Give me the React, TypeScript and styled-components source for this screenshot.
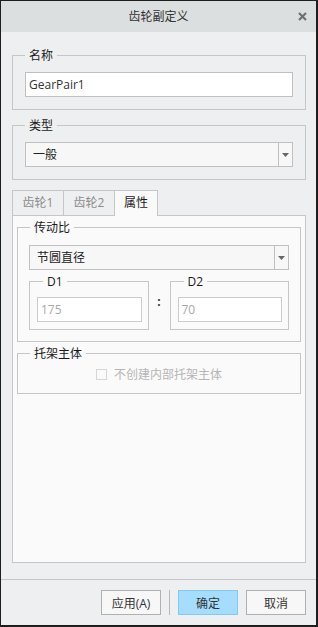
import React from "react";
import styled, { createGlobalStyle } from "styled-components";

const FONT = `"Open Sans", "Noto Sans CJK SC", sans-serif`;

const GlobalStyle = createGlobalStyle`
  html, body { margin: 0; padding: 0; background: #ffffff; }
  body { font-family: ${FONT}; font-size: 12px; }
  *, *::before, *::after { box-sizing: border-box; }
`;

const Window = styled.div`
  width: 318px;
  height: 627px;
  display: flex;
  flex-direction: column;
  border-style: solid;
  border-color: #1e1e1e;
  border-width: 1px 2px 2px 1px;
  background: #eeeff0;
  font-family: ${FONT};
  font-size: 12px;
  color: #222;
`;

const TitleBar = styled.div`
  flex: none;
  height: 31px;
  display: grid;
  grid-template-columns: 1fr auto 1fr;
  align-items: center;
  background: #dcdfe0;
`;

const Title = styled.div`
  grid-column: 2;
  color: #333;
  line-height: 17px;
`;

const CloseButton = styled.button`
  grid-column: 3;
  justify-self: end;
  margin-right: 9px;
  width: 9px;
  height: 9px;
  padding: 0;
  border: 0;
  background: none;
  display: flex;
  cursor: pointer;
`;

const Body = styled.div`
  flex: 1;
  min-height: 0;
  display: flex;
  flex-direction: column;
  padding: 15px 10px 16px 11px;
`;

const FieldBox = styled.fieldset<{ $mt?: number }>`
  margin: ${(p) => p.$mt ?? 0}px 0 0;
  padding: 0;
  min-width: 0;
  border: 1px solid #c6c6c6;
`;

const Legend = styled.legend<{ $ml?: number }>`
  margin-left: ${(p) => p.$ml ?? 12}px;
  padding: 0 4px;
  line-height: 17px;
  font-size: 12px;
  color: #1a1a1a;
`;

const FieldContent = styled.div<{ $pad: string }>`
  padding: ${(p) => p.$pad};
`;

const TextInput = styled.input`
  display: block;
  width: 100%;
  height: 25px;
  margin: 0;
  padding: 0 3px;
  border: 1px solid #c0c0c0;
  background: #ffffff;
  font: 12px ${FONT};
  color: #333;
  outline: none;

  &:disabled {
    color: #a9a9a9;
    border-color: #cccccc;
    background: #ffffff;
  }
`;

const Select = styled.div`
  display: flex;
  height: 25px;
  border: 1px solid #c0c0c0;
  background: #f7f7f7;
`;

const SelectValue = styled.div`
  flex: 1;
  padding-left: 7px;
  line-height: 23px;
  color: #222;
`;

const SelectArrow = styled.div`
  width: 14px;
  border-left: 1px solid #c0c0c0;
  display: flex;
  align-items: center;
  justify-content: center;
`;

const TabStrip = styled.div`
  display: flex;
  align-items: flex-start;
  margin-top: 10px;
`;

const Tab = styled.div<{ $active?: boolean }>`
  min-width: ${(p) => (p.$active ? 44 : 52)}px;
  height: ${(p) => (p.$active ? 26 : 25)}px;
  margin-right: -1px;
  margin-bottom: ${(p) => (p.$active ? -1 : 0)}px;
  padding: 0 9px;
  border: 1px solid #c6c6c6;
  border-bottom: none;
  line-height: 24px;
  text-align: center;
  background: ${(p) => (p.$active ? "#fafafa" : "#eeeff0")};
  color: ${(p) => (p.$active ? "#1a1a1a" : "#8c8c8c")};
  position: relative;
  z-index: ${(p) => (p.$active ? 1 : 0)};
`;

const Panel = styled.div`
  flex: 1;
  display: flex;
  flex-direction: column;
  padding: 3px 4px 0;
  border: 1px solid #c6c6c6;
  background: #fafafa;
`;

const RatioRow = styled.div`
  display: grid;
  grid-template-columns: 1fr 21px 1fr;
  margin-top: 3px;
`;

const Colon = styled.div`
  padding-top: 20px;
  line-height: 17px;
  text-align: center;
  font-weight: 700;
  color: #333;
`;

const CheckRow = styled.label`
  display: flex;
  justify-content: center;
  align-items: center;
  gap: 7px;
  line-height: 17px;
  color: #b5b5b5;
`;

const CheckBox = styled.span`
  width: 11px;
  height: 11px;
  border: 1px solid #d6d6d6;
  background: #fafafa;
`;

const Footer = styled.div`
  flex: none;
  display: flex;
  justify-content: flex-end;
  align-items: center;
  gap: 8px;
  padding: 10px 10px 10px 0;
  border-top: 1px solid #c6c6c6;
`;

const Button = styled.button<{ $primary?: boolean }>`
  width: 60px;
  height: 25px;
  padding: 0;
  border: 1px solid ${(p) => (p.$primary ? "#7ccaf5" : "#b0b0b0")};
  background: ${(p) => (p.$primary ? "#a6ddfe" : "#f7f7f7")};
  font: 12px ${FONT};
  color: #333;
  cursor: pointer;
`;

const ButtonDivider = styled.div`
  width: 1px;
  height: 25px;
  background: #bababa;
`;

const Arrow = () => (
  <svg width="7" height="4" viewBox="0 0 7 4">
    <polygon points="0,0 7,0 3.5,4" fill="#666" />
  </svg>
);

export default function App() {
  return (
    <>
      <GlobalStyle />
      <Window>
        <TitleBar>
          <Title>齿轮副定义</Title>
          <CloseButton aria-label="关闭">
            <svg width="9" height="9" viewBox="0 0 9 9">
              <path d="M1 1 L8 8 M8 1 L1 8" stroke="#707070" strokeWidth="2.2" />
            </svg>
          </CloseButton>
        </TitleBar>
        <Body>
          <FieldBox>
            <Legend>名称</Legend>
            <FieldContent $pad="8px 12px 12px">
              <TextInput defaultValue="GearPair1" />
            </FieldContent>
          </FieldBox>
          <FieldBox $mt={7}>
            <Legend>类型</Legend>
            <FieldContent $pad="8px 12px 12px">
              <Select>
                <SelectValue>一般</SelectValue>
                <SelectArrow>
                  <Arrow />
                </SelectArrow>
              </Select>
            </FieldContent>
          </FieldBox>
          <TabStrip>
            <Tab>齿轮1</Tab>
            <Tab>齿轮2</Tab>
            <Tab $active>属性</Tab>
          </TabStrip>
          <Panel>
            <FieldBox>
              <Legend>传动比</Legend>
              <FieldContent $pad="9px 11px 11px">
                <Select>
                  <SelectValue>节圆直径</SelectValue>
                  <SelectArrow>
                    <Arrow />
                  </SelectArrow>
                </Select>
                <RatioRow>
                  <FieldBox>
                    <Legend $ml={13}>D1</Legend>
                    <FieldContent $pad="7px 6px 7px 7px">
                      <TextInput defaultValue="175" disabled />
                    </FieldContent>
                  </FieldBox>
                  <Colon>:</Colon>
                  <FieldBox>
                    <Legend $ml={13}>D2</Legend>
                    <FieldContent $pad="7px 6px 7px 7px">
                      <TextInput defaultValue="70" disabled />
                    </FieldContent>
                  </FieldBox>
                </RatioRow>
              </FieldContent>
            </FieldBox>
            <FieldBox $mt={3}>
              <Legend>托架主体</Legend>
              <FieldContent $pad="4px 0 10px">
                <CheckRow>
                  <CheckBox />
                  不创建内部托架主体
                </CheckRow>
              </FieldContent>
            </FieldBox>
          </Panel>
        </Body>
        <Footer>
          <Button>应用(A)</Button>
          <ButtonDivider />
          <Button $primary>确定</Button>
          <Button>取消</Button>
        </Footer>
      </Window>
    </>
  );
}
